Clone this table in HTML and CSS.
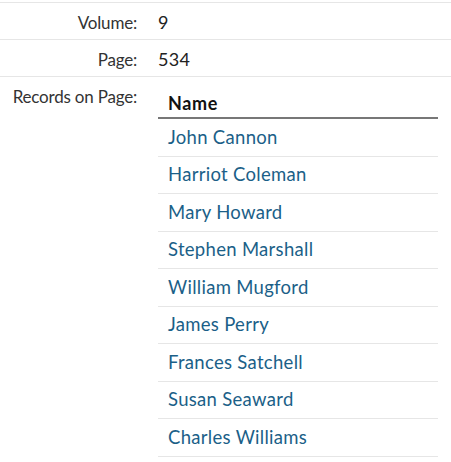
FILE: index.html
```html
<!DOCTYPE html>
<html>
<head>
<meta charset="utf-8">
<link rel="stylesheet" href="styles.css">
</head>
<body>
<div class="details">
  <div class="row">
    <div class="label">Volume:</div>
    <div class="value">9</div>
  </div>
  <div class="row">
    <div class="label">Page:</div>
    <div class="value">534</div>
  </div>
  <div class="row">
    <div class="label">Records on Page:</div>
    <div class="value">
      <table class="records">
        <thead><tr><th>Name</th></tr></thead>
        <tbody>
          <tr><td><a href="#">John Cannon</a></td></tr>
          <tr><td><a href="#">Harriot Coleman</a></td></tr>
          <tr><td><a href="#">Mary Howard</a></td></tr>
          <tr><td><a href="#">Stephen Marshall</a></td></tr>
          <tr><td><a href="#">William Mugford</a></td></tr>
          <tr><td><a href="#">James Perry</a></td></tr>
          <tr><td><a href="#">Frances Satchell</a></td></tr>
          <tr><td><a href="#">Susan Seaward</a></td></tr>
          <tr><td><a href="#">Charles Williams</a></td></tr>
        </tbody>
      </table>
    </div>
  </div>
</div>
</body>
</html>
```
FILE: styles.css
```css
html, body {
  margin: 0;
  padding: 0;
  background: #fff;
}
body {
  font-family: "Lato", "Noto Sans", sans-serif;
  font-size: 18px;
  color: #222;
  padding-top: 2px;
}
.row {
  display: grid;
  grid-template-columns: 137px 1fr;
  column-gap: 21px;
  border-top: 1px solid #e6e6e6;
  padding: 9px 0 6px;
  line-height: 21px;
}
.label {
  text-align: right;
  color: #333;
  font-size: 17px;
  letter-spacing: -0.2px;
}
.value {
  color: #222;
  letter-spacing: 0.3px;
}
.records {
  border-collapse: collapse;
  width: calc(100% - 13px);
  margin-top: -1px;
  margin-bottom: -6px;
}
.records th {
  text-align: left;
  font-weight: 700;
  color: #111;
  letter-spacing: 0.6px;
  padding: 8px 10px 3px;
  border-bottom: 2px solid #777;
}
.records td {
  padding: 7.5px 10px 8px;
  border-bottom: 1px solid #e6e6e6;
  font-size: 18.5px;
  letter-spacing: 0.3px;
}
.records a {
  color: #1b5f88;
  text-decoration: none;
}
```
